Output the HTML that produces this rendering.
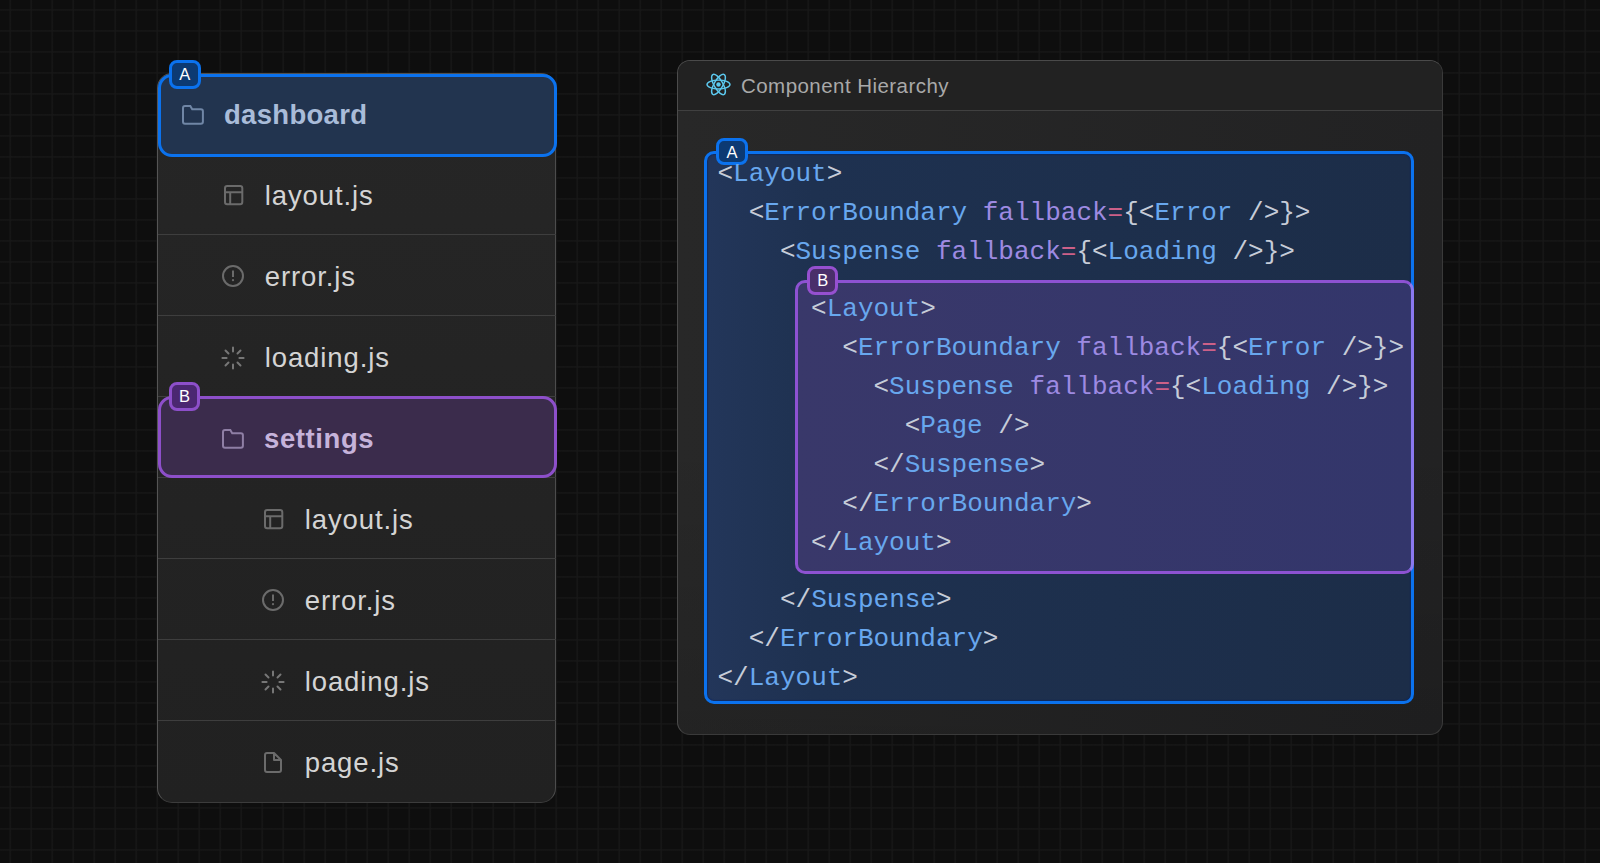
<!DOCTYPE html>
<html><head><meta charset="utf-8">
<style>
html,body{margin:0;padding:0;}
body{width:1600px;height:863px;overflow:hidden;position:relative;background-color:#0e0e0e;
background-image:repeating-linear-gradient(90deg,transparent 0,transparent 8.8px,#181818 10.2px,transparent 11.6px,transparent 21px),repeating-linear-gradient(180deg,transparent 0,transparent 8.5px,#181818 9.9px,transparent 11.3px,transparent 21px);
font-family:"Liberation Sans",sans-serif;}
.abs{position:absolute;}
#lp{left:157px;top:73px;width:397px;height:727.5px;border:1.5px solid #505050;border-color:#505050 #4c4c4c #3c3c3c #555;border-radius:15px;background:linear-gradient(180deg,#262626,#212121);}
.sep{position:absolute;left:158px;width:397.5px;height:1.2px;background:#3e3e3e;}
.box{position:absolute;box-sizing:border-box;border:3px solid;border-radius:14px;}
.badge{position:absolute;box-sizing:border-box;border:3px solid;border-radius:8px;color:#fff;font-size:16.5px;text-align:center;line-height:23px;}
.ft{position:absolute;font-size:27.5px;color:#d4d4d4;white-space:pre;letter-spacing:0.9px;line-height:1;}
.fb{font-weight:700;letter-spacing:0.3px;}
svg{position:absolute;overflow:visible;}
#rp{left:677px;top:60px;width:763.5px;height:673px;border:1.8px solid #4a4a4a;border-color:#4a4a4a #3a3a3a #3a3a3a #4c4c4c;border-radius:13px;background:linear-gradient(180deg,rgba(0,0,0,0) 55%,rgba(0,0,0,0.12)),linear-gradient(90deg,#282828,#222223);overflow:hidden;}
#rph{position:absolute;left:0;top:0;right:0;height:48.5px;background:#222;border-bottom:1.5px solid #404040;}
.code{position:absolute;font-family:"Liberation Mono",monospace;font-size:26px;line-height:39px;white-space:pre;color:#c6ccd8;}
.t{color:#68a7ee}
.p{color:#9d8ae2}
.e{color:#cc6088}
</style></head><body>

<!-- LEFT PANEL -->
<div id="lp" class="abs"></div>
<div class="sep" style="top:233.9px"></div>
<div class="sep" style="top:314.9px"></div>
<div class="sep" style="top:395.9px"></div>
<div class="sep" style="top:476.9px"></div>
<div class="sep" style="top:557.9px"></div>
<div class="sep" style="top:638.9px"></div>
<div class="sep" style="top:719.9px"></div>

<div class="box" style="left:157.5px;top:74px;width:399.5px;height:83px;background:#22344f;border-color:#0b72ee;"></div>
<div class="badge" style="left:169px;top:60px;width:31.5px;height:29px;background:#0c3a73;border-color:#0b72ee;">A</div>
<svg style="left:182px;top:104.5px" width="22" height="20" viewBox="0 0 22 20"><path d="M1 3a2 2 0 0 1 2-2H8.3L10.2 4.2H18.9a2 2 0 0 1 2 2V16.8a2 2 0 0 1-2 2H3a2 2 0 0 1-2-2Z" fill="none" stroke="#7086a6" stroke-width="2"/></svg>
<div class="ft fb" style="left:224px;top:101.0px;color:#a9bcd9">dashboard</div>

<!-- layout.js -->
<svg style="left:223.7px;top:185.2px" width="19" height="20" viewBox="0 0 19 20"><rect x="1" y="1" width="17.3" height="18.3" rx="2.2" fill="none" stroke="#6b6b6b" stroke-width="2"/><path d="M1 7.2H18.3M6.2 7.2V19.3" stroke="#6b6b6b" stroke-width="2"/></svg>
<div class="ft" style="left:264.7px;top:181.5px">layout.js</div>
<!-- error.js -->
<svg style="left:222px;top:265px" width="22" height="22" viewBox="0 0 22 22"><circle cx="11" cy="11" r="10" fill="none" stroke="#6b6b6b" stroke-width="2"/><path d="M11 5.6V12" stroke="#6b6b6b" stroke-width="2"/><circle cx="11" cy="15.2" r="1.1" fill="#6b6b6b"/></svg>
<div class="ft" style="left:264.7px;top:262.5px">error.js</div>
<!-- loading.js -->
<svg style="left:220.8px;top:345.5px" width="24" height="24" viewBox="-12 -12 24 24"><g stroke="#777" stroke-width="2" stroke-linecap="round"><path d="M0-10.6V-6.4M0 10.6V6.4M-10.6 0H-6.4M10.6 0H6.4M-7.5-7.5L-4.5-4.5M7.5 7.5L4.5 4.5M7.5-7.5L4.5-4.5M-7.5 7.5L-4.5 4.5"/></g></svg>
<div class="ft" style="left:264.7px;top:343.5px">loading.js</div>

<!-- settings -->
<div class="box" style="left:157.5px;top:396.3px;width:399.5px;height:81.7px;background:#3b2c4c;border-color:#8d4fca;"></div>
<div class="badge" style="left:169px;top:382px;width:31px;height:28.5px;background:#4b2771;border-color:#8d4fca;">B</div>
<svg style="left:222px;top:428.7px" width="22" height="20" viewBox="0 0 22 20"><path d="M1 3a2 2 0 0 1 2-2H8.3L10.2 4.2H18.9a2 2 0 0 1 2 2V16.8a2 2 0 0 1-2 2H3a2 2 0 0 1-2-2Z" fill="none" stroke="#8f7fa5" stroke-width="2"/></svg>
<div class="ft fb" style="left:264px;top:424.5px;color:#c6b3da;letter-spacing:0.6px">settings</div>

<svg style="left:263.7px;top:509.2px" width="19" height="20" viewBox="0 0 19 20"><rect x="1" y="1" width="17.3" height="18.3" rx="2.2" fill="none" stroke="#6b6b6b" stroke-width="2"/><path d="M1 7.2H18.3M6.2 7.2V19.3" stroke="#6b6b6b" stroke-width="2"/></svg>
<div class="ft" style="left:304.7px;top:505.5px">layout.js</div>
<svg style="left:262px;top:589px" width="22" height="22" viewBox="0 0 22 22"><circle cx="11" cy="11" r="10" fill="none" stroke="#6b6b6b" stroke-width="2"/><path d="M11 5.6V12" stroke="#6b6b6b" stroke-width="2"/><circle cx="11" cy="15.2" r="1.1" fill="#6b6b6b"/></svg>
<div class="ft" style="left:304.7px;top:586.5px">error.js</div>
<svg style="left:260.8px;top:669.5px" width="24" height="24" viewBox="-12 -12 24 24"><g stroke="#777" stroke-width="2" stroke-linecap="round"><path d="M0-10.6V-6.4M0 10.6V6.4M-10.6 0H-6.4M10.6 0H6.4M-7.5-7.5L-4.5-4.5M7.5 7.5L4.5 4.5M7.5-7.5L4.5-4.5M-7.5 7.5L-4.5 4.5"/></g></svg>
<div class="ft" style="left:304.7px;top:667.5px">loading.js</div>
<svg style="left:264px;top:752px" width="18" height="21" viewBox="0 0 18 21"><path d="M3 1H10L17 8V18a2 2 0 0 1-2 2H3a2 2 0 0 1-2-2V3a2 2 0 0 1 2-2Z M10 1V8H17" fill="none" stroke="#6b6b6b" stroke-width="2" stroke-linejoin="round"/></svg>
<div class="ft" style="left:304.7px;top:748.5px">page.js</div>

<!-- RIGHT PANEL -->
<div id="rp" class="abs"><div id="rph"></div></div>
<svg style="left:706.2px;top:73px" width="25" height="23" viewBox="-12.5 -11.5 25 23"><g fill="none" stroke="#5cc8ee" stroke-width="1.45"><ellipse rx="11.5" ry="4.4"/><ellipse rx="11.5" ry="4.4" transform="rotate(60)"/><ellipse rx="11.5" ry="4.4" transform="rotate(120)"/></g><circle r="2.2" fill="#5cc8ee"/></svg>
<div class="abs" style="left:741px;top:75.5px;font-size:20.5px;color:#a9a9a9;letter-spacing:0.45px;white-space:pre;line-height:1">Component Hierarchy</div>

<div class="box" style="left:704px;top:150.8px;width:710px;height:553.2px;background:linear-gradient(90deg,#23365a,#1e3150 15%,#1c2d48);border-color:#0b72ee;border-radius:10px;box-shadow:inset 0 0 1px 1px rgba(5,35,100,0.55)"></div>
<div class="box" style="left:795px;top:280px;width:619px;height:294px;background:linear-gradient(90deg,#39386a,#33366b);border-color:#8d52d2;border-right-color:#8a78ee;border-radius:10px"></div>
<div class="badge" style="left:716.3px;top:137.5px;width:31.6px;height:27.8px;background:#0c3a73;border-color:#0b72ee;font-size:16.5px;line-height:22px">A</div>
<div class="badge" style="left:807.3px;top:266.3px;width:31px;height:28.5px;background:#4a2f6a;border-color:#9650d0;font-size:16.5px;line-height:22.5px">B</div>

<div class="code" style="left:717.5px;top:155px">&lt;<span class="t">Layout</span>&gt;
  &lt;<span class="t">ErrorBoundary</span> <span class="p">fallback</span><span class="e">=</span>{&lt;<span class="t">Error</span> /&gt;}&gt;
    &lt;<span class="t">Suspense</span> <span class="p">fallback</span><span class="e">=</span>{&lt;<span class="t">Loading</span> /&gt;}&gt;</div>
<div class="code" style="left:811.1px;top:290px">&lt;<span class="t">Layout</span>&gt;
  &lt;<span class="t">ErrorBoundary</span> <span class="p">fallback</span><span class="e">=</span>{&lt;<span class="t">Error</span> /&gt;}&gt;
    &lt;<span class="t">Suspense</span> <span class="p">fallback</span><span class="e">=</span>{&lt;<span class="t">Loading</span> /&gt;}&gt;
      &lt;<span class="t">Page</span> /&gt;
    &lt;/<span class="t">Suspense</span>&gt;
  &lt;/<span class="t">ErrorBoundary</span>&gt;
&lt;/<span class="t">Layout</span>&gt;</div>
<div class="code" style="left:717.5px;top:581px">    &lt;/<span class="t">Suspense</span>&gt;
  &lt;/<span class="t">ErrorBoundary</span>&gt;
&lt;/<span class="t">Layout</span>&gt;</div>

</body></html>
